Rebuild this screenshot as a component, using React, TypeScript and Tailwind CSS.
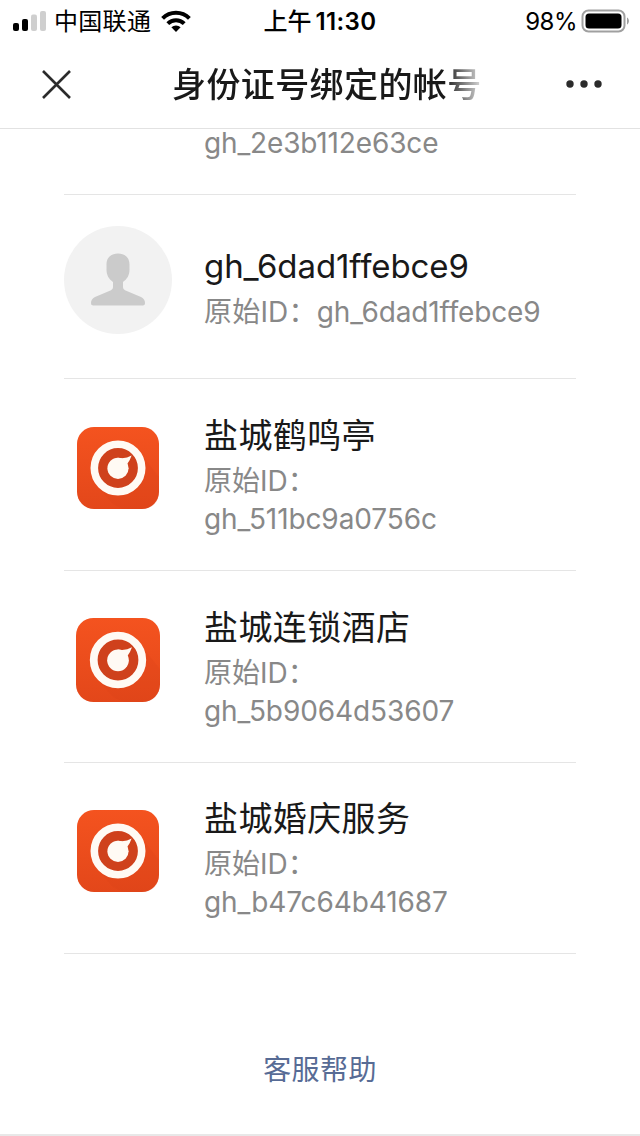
import { useId } from 'react';

type Account = {
  name: string;
  originalId: string;
  size: string;
};

const accounts: Account[] = [
  { name: '盐城鹤鸣亭', originalId: 'gh_511bc9a0756c', size: 'size-[82px]' },
  { name: '盐城连锁酒店', originalId: 'gh_5b9064d53607', size: 'size-[84px]' },
  { name: '盐城婚庆服务', originalId: 'gh_b47c64b41687', size: 'size-[82px]' },
];

function StatusBar() {
  return (
    <div className="grid h-10 grid-cols-[1fr_auto_1fr] items-center text-black">
      <div className="flex items-center pl-[13px]">
        <svg className="h-5 w-[33px]" viewBox="0 0 33 20">
          <rect x="0" y="12" width="6" height="8" rx="2" />
          <rect x="9" y="8" width="6" height="12" rx="2" />
          <rect x="18" y="3.5" width="6" height="16.5" rx="2" fill="#cfcfcf" />
          <rect x="27" y="0" width="6" height="20" rx="2" fill="#cfcfcf" />
        </svg>
        <span className="ml-2 pt-0.5 text-2xl leading-10 tracking-[0.3px]">中国联通</span>
        <svg className="ml-[10px] h-[22px] w-[30px]" viewBox="0 0 30 22">
          <g fill="none" stroke="#000" strokeWidth="4">
            <path d="M1.6 8.4a19 19 0 0 1 26.8 0" />
            <path d="M6.8 13.6a11.7 11.7 0 0 1 16.4 0" />
          </g>
          <path d="M15 22l-4.6-4.7a6.6 6.6 0 0 1 9.2 0z" />
        </svg>
      </div>
      <div className="pt-0.5 text-2xl leading-10 font-semibold">
        <span className="font-medium">上午</span>
        <span className="ml-1 tracking-[0.4px]">11:30</span>
      </div>
      <div className="flex items-center justify-end pr-[10px]">
        <span className="pt-0.5 text-2xl leading-10 tracking-[-0.5px]">98%</span>
        <svg className="ml-1 h-6 w-[49px]" viewBox="0 0 49 24">
          <rect x="1.5" y="1.5" width="42" height="21" rx="6" fill="#fff" stroke="#a0a0a0" strokeWidth="2" />
          <rect x="4.5" y="4.5" width="36" height="15" rx="3.5" />
          <path d="M46 8.5c2.6 1.2 2.6 5.8 0 7z" fill="#a0a0a0" />
        </svg>
      </div>
    </div>
  );
}

function NavBar() {
  return (
    <div className="flex h-[89px] items-center border-b border-[#e2e2e2] pr-[38px] pl-[42px] text-[#191919]">
      <button type="button" aria-label="关闭">
        <svg className="size-[29px]" viewBox="0 0 29 29" fill="none" stroke="#2b2b2b" strokeWidth="2.6">
          <path d="M1 1l27 27M28 1L1 28" />
        </svg>
      </button>
      <h1 className="ml-[101px] w-[310px] overflow-hidden bg-[linear-gradient(90deg,#191919_88%,transparent_102%)] bg-clip-text pt-[2px] text-[34px] leading-[48px] font-medium tracking-[0.4px] whitespace-nowrap text-transparent">
        身份证号绑定的帐号
      </h1>
      <button type="button" aria-label="更多" className="ml-auto">
        <svg className="h-[8px] w-[36px]" viewBox="0 0 36 8" fill="#2b2b2b">
          <circle cx="4" cy="4" r="3.7" />
          <circle cx="18" cy="4" r="3.7" />
          <circle cx="32" cy="4" r="3.7" />
        </svg>
      </button>
    </div>
  );
}

function DefaultAvatar() {
  return (
    <svg className="size-[108px] shrink-0" viewBox="0 0 108 108">
      <circle cx="54" cy="54" r="54" fill="#f2f2f2" />
      <path
        d="M54 27.5c-7 0-11.500 4-11.500 11v5c0 6 2.500 9.500 6.500 12.500v5c0 1.500-.8 2.500-2 3.200L31 71c-3 1.500-4 3.500-4 6 0 1.700.8 2.500 2.300 2.500h49.400c1.500 0 2.300-.8 2.300-2.500 0-2.500-1-4.500-4-6l-16-6.800c-1.200-.7-2-1.700-2-3.200v-5c4-3 6.500-6.500 6.500-12.500v-5c0-7-4.500-11-11.500-11z"
        fill="#cbcbcb"
      />
    </svg>
  );
}

function BrandAvatar({ size }: { size: string }) {
  const gradientId = useId();

  return (
    <svg className={size} viewBox="0 0 82 82">
      <defs>
        <linearGradient id={gradientId} x1="0" y1="0" x2="0" y2="1">
          <stop offset="0" stopColor="#f4531f" />
          <stop offset="1" stopColor="#e3471a" />
        </linearGradient>
      </defs>
      <rect width="82" height="82" rx="17" fill={`url(#${gradientId})`} />
      <path d="M22 61l13 15c4 3 10 6 16 6h14c10 0 17-7 17-17V50L60 22z" fill="#d94318" opacity="0.2" />
      <circle cx="41" cy="41" r="23.7" fill="#cf411c" stroke="#fffaf4" strokeWidth="7.6" />
      <g fill="#fffaf4">
        <circle cx="41" cy="41.3" r="10.6" />
        <path d="M40.500 30.700Q48.500 32.200 54.600 28.600Q53 33.500 50.500 36.500L46 40z" />
      </g>
    </svg>
  );
}

function Row({ account }: { account: Account }) {
  return (
    <li className="flex h-48 items-center border-b border-[#e5e5e5] last:h-[191px]">
      <div className="flex w-[108px] shrink-0 justify-center pb-[14px]">
        <BrandAvatar size={account.size} />
      </div>
      <div className="ml-8">
        <p className="-mt-px mb-px text-[34px] leading-[50px] tracking-[0.4px] text-[#191919]">{account.name}</p>
        <p className="text-[28px] leading-[38px] text-[#888]">
          原始ID：
          <br />
          <span className="tracking-[-0.1px]">{account.originalId}</span>
        </p>
      </div>
    </li>
  );
}

export default function App() {
  return (
    <div className="flex h-[1136px] w-[640px] flex-col overflow-hidden border-b-2 border-[#e8e8e8] bg-white font-['Inter','Noto_Sans_CJK_SC',sans-serif]">
      <StatusBar />
      <NavBar />

      <ul className="px-16">
        {/* Row scrolled partly under the nav bar */}
        <li className="flex h-[66px] items-start border-b border-[#e5e5e5] pl-[140px]">
          <p className="text-[28px] leading-[28px] tracking-[-0.15px] text-[#888]">gh_2e3b112e63ce</p>
        </li>
        <li className="flex h-[184px] border-b border-[#e5e5e5] pt-[31px]">
          <DefaultAvatar />
          <div className="mt-[15px] ml-8">
            <p className="text-[33px] leading-[50px] tracking-[-0.1px] text-[#191919]">gh_6dad1ffebce9</p>
            <p className="mt-0.5 text-[28px] leading-[38px] text-[#888]">
              <span className="tracking-[0.2px]">原始ID：</span>
              <span className="tracking-[-0.15px]">gh_6dad1ffebce9</span>
            </p>
          </div>
        </li>
        {accounts.map((account) => (
          <Row key={account.originalId} account={account} />
        ))}
      </ul>

      <a href="#help" className="mt-24 self-center text-[28px] leading-[40px] tracking-[0.4px] text-[#576b95]">
        客服帮助
      </a>
    </div>
  );
}
